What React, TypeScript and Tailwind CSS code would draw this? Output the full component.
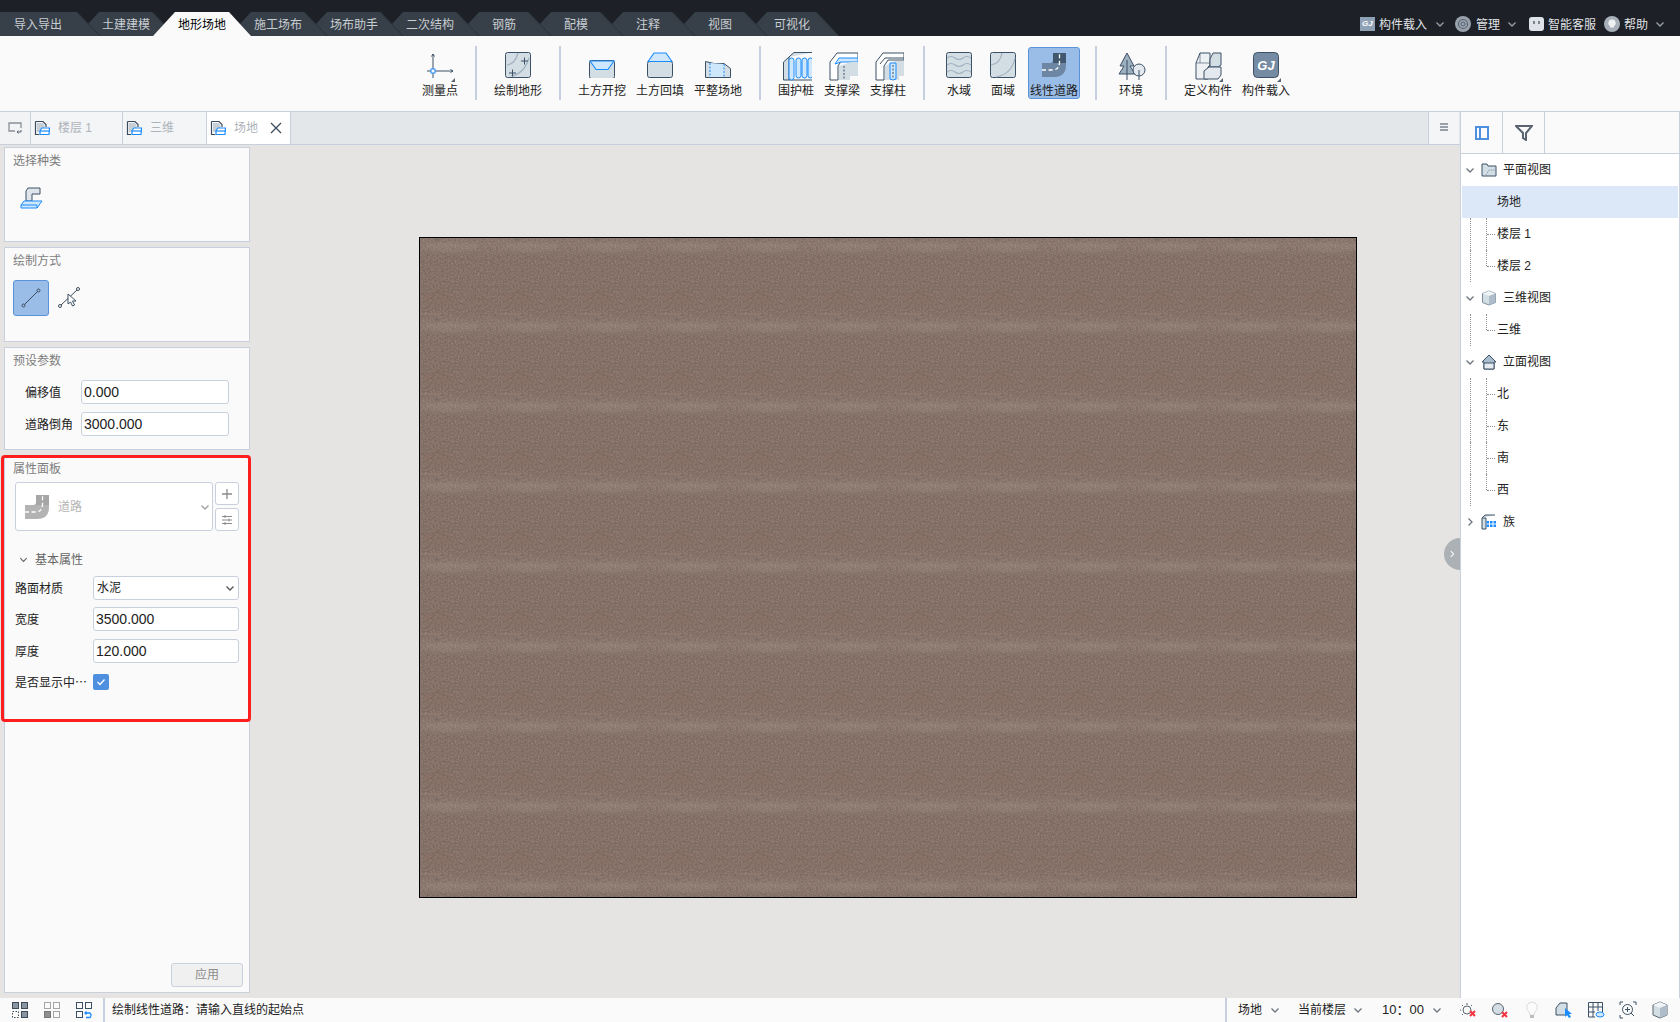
import React from "react";

const D = "#3d5166";
const L = "#d3dde4";
const B = "#1a8cff";
const S = "#cfe7fb";

type P = { children: React.ReactNode; s?: number; vb?: number };
const Ic = ({ children, s = 26, vb = 26 }: P) => (
  <svg width={s} height={s} viewBox={`0 0 ${vb} ${vb}`} fill="none" className="shrink-0">
    {children}
  </svg>
);

const Corner = () => <path d="M28 26 L28 30 L24 30 Z" fill="#5a6470" />;

const RoadShape = ({ c, dark, s = 26 }: { c: string; dark: string; s?: number }) => (
  <Ic s={s}>
    <path d="M1 11 H9 Q12 11 12 8 V1 H25 V13 Q25 25 13 25 H1 Z" fill={c} />
    <path d="M12 11 V1 H25 V11 Z" fill={dark} />
    <path d="M1 18 H11 Q18.500 18 18.500 10 V1" stroke="#fff" strokeWidth="1.300" strokeDasharray="4 2.500" />
  </Ic>
);

const icons: Record<string, React.ReactNode> = {
  测量点: (
    <svg width="30" height="30" viewBox="0 0 30 30" fill="none">
      <path d="M6 2 V26 M0 19 H26 M6 2 L4.500 4.500 M6 2 L7.500 4.500 M26 19 L23.500 17.500 M26 19 L23.500 20.500" stroke={D} strokeWidth="1" />
      <rect x="4" y="17" width="4" height="4" fill="#fff" stroke={B} />
      <Corner />
    </svg>
  ),
  绘制地形: (
    <Ic>
      <rect x=".5" y=".5" width="25" height="25" rx="2" fill={L} stroke={D} />
      <path d="M2 13 Q10 12 13 1 M6 24 Q19 22 24 6" stroke="#9fb0bf" strokeWidth="1.200" />
      <path d="M16 9 H23 M19.500 5.500 V12.500 M4 21 H11 M7.500 17.500 V24.500" stroke={D} strokeWidth="1" />
    </Ic>
  ),
  土方开挖: (
    <Ic>
      <rect x=".5" y="8.500" width="25" height="18" rx="2" fill={L} stroke={D} />
      <path d="M1 9 H25 L19 17.500 H7 Z" fill={S} stroke={B} strokeWidth="1.200" />
    </Ic>
  ),
  土方回填: (
    <Ic>
      <rect x=".5" y="9.500" width="25" height="16" rx="2" fill={L} stroke={D} />
      <path d="M1 9.500 H25 L19 1 H7 Z" fill={S} stroke={B} strokeWidth="1.200" />
    </Ic>
  ),
  平整场地: (
    <Ic>
      <path d="M.5 9.500 L9 11.500 H19 L25.500 16.500 V25.500 H.5 Z" fill={L} stroke={D} />
      <path d="M5 11 V25 H19 V12 Z" fill={S} />
      <path d="M5 11 V25 M19 12 V25" stroke={B} strokeDasharray="2 1.500" />
    </Ic>
  ),
  围护桩: (
    <Ic s={29} vb={29}>
      <path d="M6 5 L11 .5 H29 M.5 10 L6 5 V28 L.5 28 Z" fill={L} stroke={D} />
      <path d="M6 28 H29" stroke={D} />
      {[4, 11, 17, 23].map((x, i) => (
        <rect key={x} x={x + 2} y="6" width="5" height={i === 0 ? 22 : 20} rx="2.500" fill={S} stroke={B} />
      ))}
    </Ic>
  ),
  支撑梁: (
    <Ic s={29} vb={29}>
      <path d="M1 10 L8 1 H29 V8 H13 L9 14 V28 H1 Z" fill="#fff" stroke={D} />
      <path d="M6 12 L10 6 H29 V10 H12 Z" fill={S} stroke={B} />
      <path d="M10 14 L22 10 H29 V24 H21 V28 H10 Z" fill={L} />
      <path d="M15 14 V28" stroke={D} strokeDasharray="2 1.500" />
    </Ic>
  ),
  支撑柱: (
    <Ic s={29} vb={29}>
      <path d="M1 10 L8 1 H29 V8 H13 L9 14 V28 H1 Z" fill="#fff" stroke={D} />
      <path d="M10 14 L20 9 H29 V24 H24 V28 H10 Z" fill={L} />
      <path d="M15 11 H21 V27 Q18 29 15 27 Z" fill={S} stroke={B} />
      <path d="M5 12 L10 6 H29" stroke={D} />
      <path d="M18 13 V27" stroke={D} strokeDasharray="2 1.500" />
    </Ic>
  ),
  水域: (
    <Ic>
      <rect x=".5" y=".5" width="25" height="25" rx="2" fill={L} stroke={D} />
      {[6, 13, 20].map((y) => (
        <path key={y} d={`M1 ${y} Q5 ${y - 3} 9 ${y} T17 ${y} T25 ${y}`} stroke="#9fb0bf" strokeWidth="1.100" />
      ))}
    </Ic>
  ),
  面域: (
    <Ic>
      <rect x=".5" y=".5" width="25" height="25" rx="2" fill={L} stroke={D} />
      <path d="M1 13 Q10 12 12 1 M6 25 Q22 22 25 6" stroke="#9fb0bf" strokeWidth="1.200" />
    </Ic>
  ),
  线性道路: <RoadShape c="#6d86a3" dark="#42576e" />,
  环境: (
    <Ic s={28} vb={28}>
      <path d="M9 1 L16 14 H12 L17 22 H1 L6 14 H2 Z" fill="#9db0c0" stroke={D} />
      <path d="M9 8 V28" stroke={D} />
      <circle cx="21" cy="18" r="6" fill="#e3e9ee" stroke={D} />
      <path d="M21 18 V28" stroke={D} />
    </Ic>
  ),
  定义构件: (
    <svg width="30" height="30" viewBox="0 0 30 30" fill="none">
      <path d="M1 11 L5 1 H15 V13 L13 15 V27 H1 Z" fill="#edf1f4" stroke={D} />
      <path d="M5 1 V11 H1 M5 11 L15 11" stroke={D} strokeWidth=".6" />
      <path d="M15 7 L18 1 H26 V13 L23 15 H15 Z" fill={L} stroke={D} />
      <path d="M9 27 V19 L14 15 H26 V23 L23 27 Z" fill="#e3e9ee" stroke={D} />
      <Corner />
    </svg>
  ),
  构件载入: (
    <svg width="30" height="30" viewBox="0 0 30 30" fill="none">
      <rect x=".5" y=".5" width="25" height="25" rx="4" fill="#748ba3" stroke={D} />
      <text x="13" y="18" textAnchor="middle" fontSize="13" fontWeight="700" fontStyle="italic" fontFamily="Liberation Sans" fill="#fff">GJ</text>
      <Corner />
    </svg>
  ),
};

type Item = { t: string; w: number; on?: boolean };
const groups: Item[][] = [
  [{ t: "测量点", w: 40 }],
  [{ t: "绘制地形", w: 52 }],
  [{ t: "土方开挖", w: 52 }, { t: "土方回填", w: 52 }, { t: "平整场地", w: 52 }],
  [{ t: "围护桩", w: 40 }, { t: "支撑梁", w: 40 }, { t: "支撑柱", w: 40 }],
  [{ t: "水域", w: 38 }, { t: "面域", w: 38 }, { t: "线性道路", w: 52, on: true }],
  [{ t: "环境", w: 38 }],
  [{ t: "定义构件", w: 52 }, { t: "构件载入", w: 52 }],
];

const Chev = ({ c = "#8b9096", s = 10, right }: { c?: string; s?: number; right?: boolean }) => (
  <svg width={s} height={s} viewBox="0 0 10 10" fill="none" className="shrink-0">
    <path d={right ? "M3.500 1.500 L7 5 L3.500 8.500" : "M1.500 3.500 L5 7 L8.500 3.500"} stroke={c} strokeWidth="1.300" />
  </svg>
);

const tabs = ["导入导出", "土建建模", "地形场地", "施工场布", "场布助手", "二次结构", "钢筋", "配模", "注释", "视图", "可视化"];

function TopTab({ t, i }: { t: string; i: number }) {
  const active = t === "地形场地";
  const first = i === 0;
  const w = first ? 100 : i >= 6 ? 94 : 98;
  const pts = first ? `0,0 ${w - 23},0 ${w},24 0,24` : `0,24 22,0 ${w - 22},0 ${w},24`;
  const margin = first ? "" : i === 1 ? "-ml-[23px]" : "-ml-[22px]";
  return (
    <div
      className={`relative h-6 flex items-center justify-center shrink-0 text-xs ${margin} ${active ? "text-black" : "text-[#c8cdd2]"}`}
      style={{ width: w, zIndex: active ? 30 : 20 - i }}
    >
      <svg width={w} height="24" viewBox={`0 0 ${w} 24`} className="absolute inset-0">
        <polygon points={pts} fill={active ? "#fafafa" : "#373f48"} />
        {!active && <line x1={w - 23} y1="0" x2={w} y2="24" stroke="#2a3038" strokeWidth="1" />}
      </svg>
      <span className={`relative pt-[1px] ${first ? "pr-[24px]" : ""}`}>{t}</span>
    </div>
  );
}

const DocIcon = () => (
  <svg width="17" height="17" viewBox="0 0 17 17" fill="none" className="shrink-0">
    <path d="M1.500 1.500 H9 L12 4.500 V7 M1.500 1.500 V14.500 H5" stroke="#3d4c5c" strokeWidth="1.200" />
    <path d="M3 3 L9 3 L11 7 L6 12 L3 12 Z" fill="#c6ced6" />
    <path d="M6 10.500 L8 8 H15.500 L15 14.500 H6 Z" fill="#fff" stroke={B} strokeWidth="1.200" />
    <path d="M6 11 H15" stroke={B} strokeWidth="1.200" />
  </svg>
);

const DocTab = ({ t, w, active, pl }: { t: string; w: number; active?: boolean; pl: number }) => (
  <div className={`h-full flex items-center border-r border-[#c8d0dd] text-xs text-[#aeb3ba] ${active ? "bg-white" : "bg-[#f4f5f7]"}`} style={{ width: w, paddingLeft: pl }}>
    <DocIcon />
    <span className="ml-[7px]">{t}</span>
    {active && (
      <svg width="12" height="12" viewBox="0 0 12 12" className="ml-[12px]">
        <path d="M1 1 L11 11 M11 1 L1 11" stroke="#3d4c5c" strokeWidth="1.300" />
      </svg>
    )}
  </div>
);

const Field = ({ v, w }: { v: string; w: number }) => (
  <div className="h-6 bg-white border border-[#c8d0dd] rounded-[3px] text-sm text-[#222] flex items-center pl-[2px] leading-none" style={{ width: w }}>
    {v}
  </div>
);

const Panel = ({ title, h, children }: { title: string; h: number; children?: React.ReactNode }) => (
  <div className="relative bg-[#fafafa] border border-[#c8d0dd] w-[246px] pt-[5px] shrink-0 flex flex-col" style={{ height: h }}>
    <div className="text-xs h-[14px] leading-[16px] text-[#7d7d7d] pl-2">{title}</div>
    {children}
  </div>
);

type Row = { t: string; d: 0 | 1; ic?: React.ReactNode; sel?: boolean; last?: boolean; closed?: boolean };

const TFolder = (
  <Ic s={16} vb={16}>
    <path d="M1 2 H6 L7 4 H15 V14 H1 Z" fill="#d3dde4" stroke={D} />
    <path d="M5 13 L8 8 H15" stroke="#8b9ba9" strokeDasharray="1.500 1" />
  </Ic>
);
const TCube = (
  <Ic s={16} vb={16}>
    <path d="M8 1 L14.500 3.500 V12.500 L8 15 L1.500 12.500 V3.500 Z" fill="#d3dde4" stroke="#7d8e9e" />
    <path d="M1.500 3.500 L8 6 L14.500 3.500 L8 1 Z" fill="#f0f3f6" />
    <path d="M8 6 V15 L14.500 12.500 V3.500 Z" fill="#afbdca" />
  </Ic>
);
const THouse = (
  <Ic s={16} vb={16}>
    <path d="M1 8 L8 1 L15 8 H13 V15 H3 V8 Z" fill="#a9bccd" stroke={D} />
    <path d="M3 9 H13 V15 H3 Z" fill="#e5ebf0" stroke={D} />
  </Ic>
);
const TFam = (
  <Ic s={16} vb={16}>
    <path d="M1 4 L4 1 H14 M1 4 V15 H5 V4 Z" fill="#d3dde4" stroke={D} />
    {[7, 10.5, 14].flatMap((x) => [7, 10.5].map((y) => <rect key={`${x}-${y}`} x={x - 1.5} y={y} width="2.500" height="2.500" fill={B} />))}
  </Ic>
);

const tree: Row[] = [
  { t: "平面视图", d: 0, ic: TFolder },
  { t: "场地", d: 1, sel: true },
  { t: "楼层 1", d: 1 },
  { t: "楼层 2", d: 1, last: true },
  { t: "三维视图", d: 0, ic: TCube },
  { t: "三维", d: 1, last: true },
  { t: "立面视图", d: 0, ic: THouse },
  { t: "北", d: 1 },
  { t: "东", d: 1 },
  { t: "南", d: 1 },
  { t: "西", d: 1, last: true },
  { t: "族", d: 0, ic: TFam, closed: true },
];

const TreeRow = ({ r }: { r: Row }) => {
  if (r.d === 0)
    return (
      <div className="h-8 flex items-center text-xs text-[#222]">
        <div className="w-[15px] flex justify-end pr-[1px]"><Chev right={r.closed} c="#6d7680" /></div>
        <div className="ml-[5px]">{r.ic}</div>
        <span className="ml-[6px]">{r.t}</span>
      </div>
    );
  return (
    <div className={`relative h-8 flex items-center pl-[36px] text-xs text-[#222] ${r.sel ? "bg-[#dce8f8] mx-[1px] !pl-[35px]" : ""}`}>
      {!r.sel && (
        <>
          <span className="absolute left-[9px] top-0 bottom-0 border-l border-dotted border-[#8f8f8f]" />
          <span className={`absolute left-[25px] top-0 border-l border-dotted border-[#8f8f8f] ${r.last ? "h-4" : "h-8"}`} />
          <span className="absolute left-[26px] top-4 w-[8px] border-t border-dotted border-[#8f8f8f]" />
        </>
      )}
      <span>{r.t}</span>
    </div>
  );
};

const SB = ({ children }: { children: React.ReactNode }) => (
  <svg width="18" height="18" viewBox="0 0 18 18" fill="none" className="shrink-0">{children}</svg>
);

const RowLabel = ({ t, w }: { t: string; w: number }) => (
  <div className="text-xs text-[#222] pt-[1px] whitespace-nowrap" style={{ width: w }}>{t}</div>
);

export default function App() {
  return (
    <div className="w-[1680px] h-[1022px] overflow-hidden flex flex-col font-['Liberation_Sans','Noto_Sans_CJK_SC',sans-serif] bg-[#e5e4e2]">
      {/* top bar */}
      <div className="h-9 bg-[#1d2127] flex items-end justify-between shrink-0">
        <div className="flex">
          {tabs.map((t, i) => <TopTab key={t} t={t} i={i} />)}
        </div>
        <div className="h-6 flex items-center text-xs text-[#e0e3e6] pr-[15px]">
          <div className="w-[15px] h-[14px] bg-[#8fa2b5] text-white text-[8px] font-bold italic flex items-center justify-center">GJ</div>
          <span className="ml-[4px] pt-[1px]">构件载入</span>
          <div className="ml-[8px]"><Chev c="#9aa0a6" /></div>
          <svg width="16" height="16" viewBox="0 0 16 16" className="ml-[10px]">
            <circle cx="8" cy="8" r="8" fill="#98a2ad" />
            <circle cx="8" cy="8" r="4.500" fill="none" stroke="#5a6470" strokeWidth="1.200" />
            <circle cx="8" cy="8" r="2" fill="none" stroke="#5a6470" />
          </svg>
          <span className="ml-[5px] pt-[1px]">管理</span>
          <div className="ml-[7px]"><Chev c="#9aa0a6" /></div>
          <svg width="15" height="14" viewBox="0 0 15 14" className="ml-[12px]">
            <rect width="15" height="14" rx="3" fill="#dfe3e7" />
            <path d="M5 4 V7 M10 4 V7" stroke="#4a525b" strokeWidth="1.300" />
          </svg>
          <span className="ml-[4px] pt-[1px]">智能客服</span>
          <svg width="16" height="16" viewBox="0 0 16 16" className="ml-[8px]">
            <circle cx="8" cy="8" r="8" fill="#a7b0b9" />
            <path d="M8 3.500 A3.500 3.500 0 0 1 10 10 V11.500 H6 V10 A3.500 3.500 0 0 1 8 3.500 Z" fill="#eef0f2" />
          </svg>
          <span className="ml-[4px] pt-[1px]">帮助</span>
          <div className="ml-[7px]"><Chev c="#9aa0a6" /></div>
        </div>
      </div>

      {/* ribbon */}
      <div className="h-[76px] bg-[#fafafa] border-b border-[#c8d0dd] flex items-start pl-[417px] pt-[10px] shrink-0">
        {groups.map((g, i) => (
          <React.Fragment key={i}>
            {i > 0 && <div className="w-[2px] h-[54px] bg-[#c5cfde] mx-[12px]" />}
            <div className="flex">
              {g.map((it) => (
                <div key={it.t} className="mx-[3px] h-[52px] mt-[1px] flex flex-col items-center">
                  <div
                    className={`h-[52px] flex flex-col items-center rounded-[3px] pt-[5px] ${it.on ? "bg-[#9abde8] border border-[#5b92dc] !pt-[4px]" : ""}`}
                    style={{ width: it.w }}
                  >
                    <div className="h-[26px] w-[26px]">{icons[it.t]}</div>
                    <div className="text-xs h-[14px] leading-[16px] text-[#222] whitespace-nowrap mt-[5px]">{it.t}</div>
                  </div>
                </div>
              ))}
            </div>
          </React.Fragment>
        ))}
      </div>

      {/* body */}
      <div className="flex-1 flex min-h-0">
        <div className="w-[1460px] flex flex-col shrink-0">
          <div className="h-[33px] bg-[#e4e7ea] border-b border-[#c8d0dd] flex shrink-0 items-stretch">
            <div className="w-[31px] h-full bg-[#f2f3f5] border-r border-[#c8d0dd] flex items-center justify-center">
              <svg width="14" height="12" viewBox="0 0 14 12" fill="none">
                <path d="M13 6 V1 H1 V9 H7" stroke="#8a8f96" strokeWidth="1.300" />
                <path d="M13 8 V10 H9 M10.500 8.500 L9 10 L10.500 11.500" stroke="#5a6470" />
              </svg>
            </div>
            <DocTab t="楼层 1" w={92} pl={3} />
            <DocTab t="三维" w={84} pl={3} />
            <DocTab t="场地" w={84} pl={3} active />
            <div className="flex-1" />
            <div className="w-[31px] bg-[#f4f5f7] border-l border-[#c8d0dd] flex items-center justify-center pb-[2px] mr-[1px]">
              <svg width="8" height="8" viewBox="0 0 8 8"><path d="M0 1 H8 M0 4 H8 M0 7 H8" stroke="#3d4c5c" /></svg>
            </div>
          </div>
          <div className="flex-1 flex min-h-0 relative">
            <div className="w-[250px] pl-1 pt-[2px] flex flex-col gap-[5px] shrink-0">
              <Panel title="选择种类" h={95}>
                <div className="mt-[20px] ml-[15px]">
                  <svg width="24" height="22" viewBox="0 0 24 22" fill="none">
                    <path d="M8 1 H20 V7 H12 V14 H6 V4 Z" fill="#dfe5ea" stroke={D} />
                    <path d="M4 14 H22 L17 21 H1 V18 Z" fill={S} stroke={B} />
                    <path d="M1 18 H17 V21" stroke={B} />
                  </svg>
                </div>
              </Panel>
              <Panel title="绘制方式" h={95}>
                <div className="flex items-center mt-[13px] ml-2">
                  <div className="w-9 h-9 bg-[#9abde8] border border-[#5b92dc] rounded-[3px] flex items-center justify-center">
                    <svg width="20" height="20" viewBox="0 0 20 20" fill="none">
                      <path d="M2 18 L18 2" stroke="#3d4c5c" />
                      <circle cx="2.500" cy="17.500" r="1.500" fill="#9abde8" stroke="#3d4c5c" />
                      <circle cx="17.500" cy="2.500" r="1.500" fill="#9abde8" stroke="#3d4c5c" />
                    </svg>
                  </div>
                  <svg width="22" height="22" viewBox="0 0 22 22" fill="none" className="ml-[9px]">
                    <path d="M2 19 L20 2" stroke="#3d4c5c" />
                    <circle cx="2" cy="19" r="1.500" fill="#fff" stroke="#3d4c5c" />
                    <circle cx="20" cy="2" r="1.500" fill="#fff" stroke="#3d4c5c" />
                    <path d="M10 7 L10 17 L12.500 15 L14.500 19 L16.500 18 L14.500 14 L18 14 Z" fill="#fff" stroke="#3d5166" />
                  </svg>
                </div>
              </Panel>
              <Panel title="预设参数" h={103}>
                <div className="mt-[13px] pl-[20px] flex flex-col gap-2">
                  <div className="flex items-center">
                    <RowLabel t="偏移值" w={56} />
                    <Field v="0.000" w={148} />
                  </div>
                  <div className="flex items-center">
                    <RowLabel t="道路倒角" w={56} />
                    <Field v="3000.000" w={148} />
                  </div>
                </div>
              </Panel>
              <Panel title="属性面板" h={538}>
                <div className="flex mt-[7px] ml-[10px]">
                  <div className="w-[198px] h-[49px] bg-white border border-[#c8d0dd] rounded-[3px] flex items-center pl-2 pr-[2px]">
                    <RoadShape c="#b3b3b3" dark="#a6a6a6" />
                    <span className="ml-[8px] text-xs text-[#b5b5b5] flex-1">道路</span>
                    <Chev c="#a0a0a0" />
                  </div>
                  <div className="ml-[2px] flex flex-col gap-[3px]">
                    <div className="w-6 h-[23px] bg-white border border-[#c8d0dd] rounded-[3px] flex items-center justify-center">
                      <svg width="12" height="12" viewBox="0 0 12 12"><path d="M6 1 V11 M1 6 H11" stroke="#8c8c8c" strokeWidth="1.300" /></svg>
                    </div>
                    <div className="w-6 h-[23px] bg-white border border-[#c8d0dd] rounded-[3px] flex items-center justify-center">
                      <svg width="12" height="12" viewBox="0 0 12 12" fill="none"><path d="M1 2.500 H11 M1 6 H11 M1 9.500 H11" stroke="#8c8c8c" /><path d="M4 1 V4 M8 4.500 V7.500 M4 8 V11" stroke="#8c8c8c" /></svg>
                    </div>
                  </div>
                </div>
                <div className="flex items-center mt-[21px] ml-[14px] h-[14px] text-xs text-[#666]">
                  <Chev c="#666" s={9} />
                  <span className="ml-[7px] pt-[1px]">基本属性</span>
                </div>
                <div className="ml-[10px] mt-[10px] flex flex-col">
                  <div className="flex items-center">
                    <RowLabel t="路面材质" w={78} />
                    <div className="w-[146px] h-6 bg-white border border-[#c8d0dd] rounded-[3px] flex items-center pl-[3px] pr-[3px] justify-between text-xs text-[#222]">
                      水泥<Chev c="#555" />
                    </div>
                  </div>
                  <div className="flex items-center mt-[7px]">
                    <RowLabel t="宽度" w={78} />
                    <Field v="3500.000" w={146} />
                  </div>
                  <div className="flex items-center mt-2">
                    <RowLabel t="厚度" w={78} />
                    <Field v="120.000" w={146} />
                  </div>
                  <div className="flex items-center mt-[10px]">
                    <div className="w-[78px] text-xs text-[#222] whitespace-nowrap pt-[1px] font-['Noto_Sans_CJK_SC',sans-serif]">是否显示中⋯</div>
                    <div className="w-4 h-4 bg-[#4f8fdf] rounded-[2px] flex items-center justify-center">
                      <svg width="10" height="10" viewBox="0 0 10 10" fill="none"><path d="M1.500 5 L4 7.500 L8.500 2.500" stroke="#fff" strokeWidth="1.300" /></svg>
                    </div>
                  </div>
                </div>
                <div className="mt-auto self-end mr-[6px] mb-[5px] w-[72px] h-6 bg-[#f0f0f0] border border-[#c8d0dd] rounded-[3px] text-xs text-[#8c8c8c] flex items-center justify-center">应用</div>
                <div className="absolute -left-[4px] -top-[1px] w-[250px] h-[267px] border-[3px] border-[#ff1e1e] rounded-[4px] pointer-events-none" />
              </Panel>
            </div>
            <div className="flex-1 pl-[169px] pt-[92px] min-w-0">
              <div className="w-[938px] h-[661px] border border-black bg-[#84736a]">
                <svg width="936" height="659" className="block">
                  <defs>
                    <filter id="grain" x="0" y="0" width="100%" height="100%" colorInterpolationFilters="sRGB">
                      <feTurbulence type="fractalNoise" baseFrequency="0.6" numOctaves="2" seed="4" stitchTiles="stitch" />
                      <feGaussianBlur stdDeviation="0.35" />
                      <feColorMatrix type="matrix" values="0.2 0.08 0 0 0.38  0.16 0.08 0 0 0.325  0.14 0.08 0 0 0.3  0 0 0 0 1" />
                    </filter>
                    <linearGradient id="band" x1="0" y1="0" x2="0" y2="1">
                      <stop offset="0" stopColor="#cfc4bd" stopOpacity="0" />
                      <stop offset="0.5" stopColor="#cfc4bd" stopOpacity="0.09" />
                      <stop offset="1" stopColor="#cfc4bd" stopOpacity="0" />
                    </linearGradient>
                    <pattern id="tile" width="80" height="80" y="75" patternUnits="userSpaceOnUse">
                      <rect width="80" height="80" filter="url(#grain)" />
                      <rect width="80" height="24" fill="url(#band)" />
                      <ellipse cx="32" cy="14" rx="26" ry="5" fill="#cfc4bd" opacity=".07" />
                      <rect x="0" y="0" width="22" height="1.500" fill="#c9a596" opacity=".18" />
                      <ellipse cx="20" cy="64" rx="15" ry="7" fill="#8e5e45" opacity=".1" />
                      <ellipse cx="60" cy="66" rx="12" ry="6" fill="#8e5e45" opacity=".07" />
                      <rect x="0" y="53" width="80" height="1.500" fill="#4e4440" opacity=".05" />
                      <circle cx="17" cy="6" r="1.500" fill="#5b5a58" opacity=".45" />
                      <circle cx="63" cy="6" r="1.200" fill="#5b5a58" opacity=".25" />
                      <circle cx="53" cy="33" r="0.800" fill="#7f878a" opacity=".5" />
                    </pattern>
                  </defs>
                  <rect width="936" height="659" fill="url(#tile)" />
                </svg>
              </div>
            </div>
            <div className="absolute right-0 top-[393px] w-4 h-8 rounded-l-full bg-[#abb1b5] flex items-center justify-center">
              <Chev c="#fff" s={8} right />
            </div>
          </div>
        </div>

        {/* right panel */}
        <div className="w-[220px] bg-white border-l border-r border-[#c8d0dd] flex flex-col shrink-0">
          <div className="h-[42px] bg-[#fafafa] border-b border-[#c8d0dd] flex shrink-0">
            <div className="w-[42px] border-r border-[#c8d0dd] flex items-center justify-center">
              <svg width="14" height="14" viewBox="0 0 14 14" fill="none"><rect x="1" y="1" width="12" height="12" stroke="#4f8fdf" strokeWidth="2" /><path d="M5 1 V13" stroke="#4f8fdf" strokeWidth="2" /></svg>
            </div>
            <div className="w-[42px] border-r border-[#c8d0dd] flex items-center justify-center">
              <svg width="18" height="16" viewBox="0 0 18 16" fill="none"><path d="M1 1 H17 L11 8 V15 L8 13 V8 Z" stroke="#5a6470" strokeWidth="2" /></svg>
            </div>
          </div>
          {tree.map((r) => <TreeRow key={r.t} r={r} />)}
        </div>
      </div>

      {/* status bar */}
      <div className="h-6 bg-[#fafafa] flex items-center shrink-0 text-xs text-[#222]">
        <div className="flex items-center pl-[11px] gap-[14px] w-[103px]">
          <SB><rect x="1.500" y="1.500" width="6" height="6" fill="#8a95a0" stroke="#3d4c5c" /><rect x="10.500" y="1.500" width="6" height="6" fill="#8a95a0" stroke="#3d4c5c" /><rect x="1.500" y="10.500" width="6" height="6" stroke="#3d4c5c" strokeDasharray="1.500 1.500" /><rect x="10.500" y="10.500" width="6" height="6" fill="#8a95a0" stroke="#3d4c5c" /></SB>
          <SB><rect x="1.500" y="1.500" width="6" height="6" stroke="#a5a5a5" /><rect x="10.500" y="1.500" width="6" height="6" stroke="#a5a5a5" /><rect x="1.500" y="10.500" width="6" height="6" fill="#8f8f8f" stroke="#777" /><rect x="10.500" y="10.500" width="6" height="6" stroke="#a5a5a5" /></SB>
          <SB><rect x="1.500" y="1.500" width="6" height="6" stroke="#3d5166" /><rect x="10.500" y="1.500" width="6" height="6" stroke="#3d5166" /><rect x="1.500" y="10.500" width="6" height="6" stroke="#3d5166" /><path d="M10 12 H15 Q17 14 15 16.500 H11 M11.500 10.500 L10 12 L11.500 13.500" stroke={B} strokeWidth="1.300" /></SB>
        </div>
        <div className="w-[2px] h-6 bg-[#c5cfde]" />
        <div className="ml-[7px] w-[1113px]">绘制线性道路：请输入直线的起始点</div>
        <div className="w-[2px] h-6 bg-[#c5cfde]" />
        <span className="ml-[11px]">场地</span>
        <div className="ml-[8px]"><Chev c="#6d7680" /></div>
        <span className="ml-[18px]">当前楼层</span>
        <div className="ml-[7px]"><Chev c="#6d7680" /></div>
        <span className="ml-[19px] text-[13px]">10：00</span>
        <div className="ml-[8px]"><Chev c="#6d7680" /></div>
        <div className="ml-[17px] flex items-center gap-[14px]">
          <SB><circle cx="8" cy="9" r="4" stroke="#5a6470" /><path d="M8 2 V4 M2 9 H1 M3 4 L4 5 M13 4 L12 5 M3 14 L4 13" stroke="#5a6470" /><path d="M11 10 L16 15 M16 10 L11 15" stroke="#f2323c" strokeWidth="2" /></SB>
          <SB><circle cx="7" cy="8" r="5.500" fill="#d3dde4" stroke="#5a6470" /><path d="M11 11 L16 16 M16 11 L11 16" stroke="#f2323c" strokeWidth="2" /></SB>
          <SB><path d="M9 1 A5.500 5.500 0 0 1 12 11 L11 14 H7 L6 11 A5.500 5.500 0 0 1 9 1 Z" fill="#fbfbfb" stroke="#dcdcdc" /><rect x="7" y="14" width="4" height="3" fill="#bdbdbd" /></SB>
          <SB><path d="M1 14 V7 L5 2 H12 V14 Z" fill="#d3dde4" stroke="#3d5166" /><path d="M10 7 L10 16 L12 14 L14 17 L16 16 L14 13 L17 13 Z" fill={B} /></SB>
          <SB><path d="M1.500 1.500 H15.500 V11 M1.500 1.500 V16 H8 M1.500 6 H15.500 M1.500 11 H8 M6 1.500 V16 M11 1.500 V10" stroke="#3d5166" /><ellipse cx="13" cy="13.500" rx="4" ry="2.500" fill="#cfe7fb" stroke={B} /></SB>
          <SB><circle cx="8.500" cy="8.500" r="5" stroke="#3d5166" /><path d="M6 8.500 H11 M8.500 6 V11 M12 12 L15 15" stroke="#3d5166" /><path d="M1 4 V1 H4 M14 1 H17 V4 M1 14 V17 H4" stroke="#3d5166" /></SB>
          <SB><path d="M9 1 L16 4 V14 L9 17 L2 14 V4 Z" fill="#d3dde4" stroke="#5a6470" /><path d="M2 4 L9 7 L16 4 L9 1 Z" fill="#f0f3f6" /><path d="M9 7 V17 L16 14 V4 Z" fill="#afbdca" /></SB>
        </div>
      </div>
    </div>
  );
}
